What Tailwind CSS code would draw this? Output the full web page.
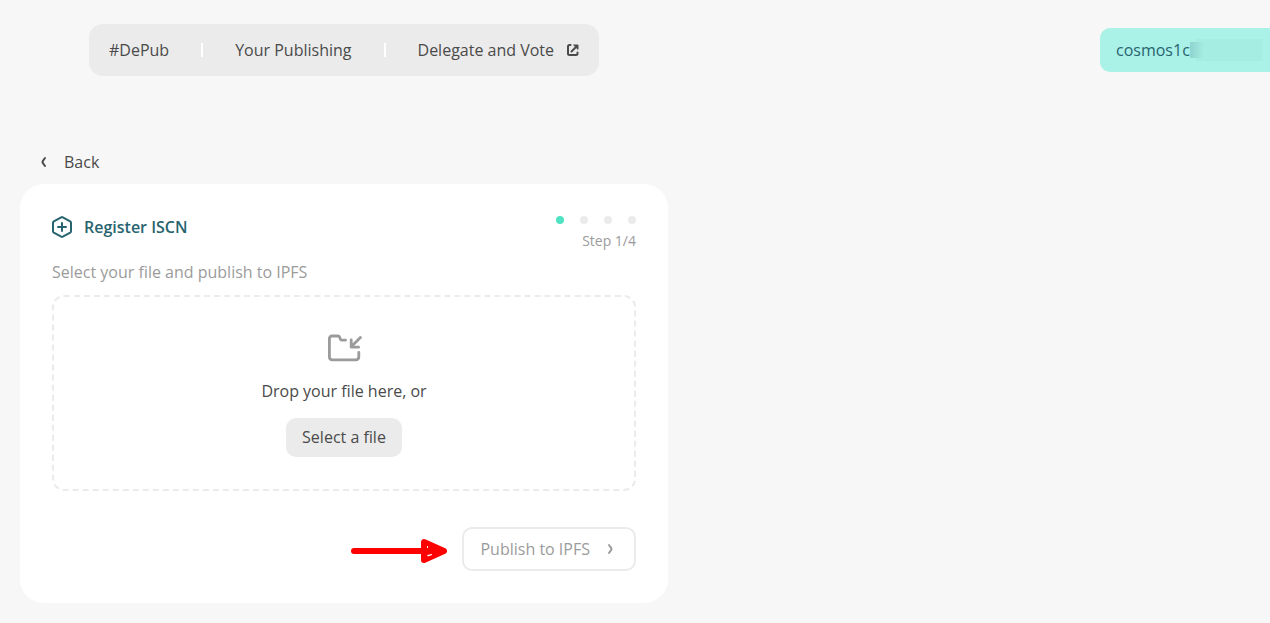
<!DOCTYPE html>
<html lang="en">
<head>
<meta charset="utf-8">
<meta name="viewport" content="width=device-width, initial-scale=1">
<title>Register ISCN</title>
<script src="https://cdn.jsdelivr.net/npm/@tailwindcss/browser@4"></script>
</head>
<body class="min-h-screen overflow-x-hidden bg-[#f7f7f7] font-['Open_Sans',sans-serif] text-base text-[#4a4a4a]">
  <header class="flex items-center justify-between pt-6 pl-[89px]">
    <nav class="flex h-[52px] items-center gap-8 rounded-[14px] bg-[#ebebeb] px-5">
      <a href="#depub">#DePub</a>
      <span class="h-3.5 w-0.5 bg-white"></span>
      <a href="#publishing">Your Publishing</a>
      <span class="h-3.5 w-0.5 bg-white"></span>
      <a href="#vote" class="flex items-center gap-3">Delegate and Vote
        <svg class="h-3.5 w-[13px]" viewBox="0 0 13 14" fill="none" stroke="currentColor" stroke-width="2" stroke-linecap="round" aria-hidden="true">
          <path d="M4.500 2H3.500Q2 2 2 3.500V10.500Q2 12 3.500 12H10Q11.500 12 11.500 10.500V9.500"/>
          <path d="M5.500 8.500L10 4"/>
          <path d="M8 2H12V6Z" fill="currentColor" stroke-width="1" stroke-linejoin="round"/>
        </svg>
      </a>
    </nav>
    <button type="button" class="flex h-11 w-[170px] items-center rounded-l-[10px] bg-[#aaf1e7] pl-4 text-[#28646e]">
      <span>cosmos1c</span>
      <span class="flex h-[22px] w-18 items-center bg-linear-to-r from-transparent from-[6px] to-[#a5ede2] to-[6px]">
        <span class="h-4 w-3.5 bg-linear-to-r from-[#8fd3cf] to-[#a5ede2]"></span>
      </span>
    </button>
  </header>

  <main class="max-w-[688px] px-5 pt-[74px]">
    <a href="#back" class="flex w-fit items-center gap-4 pl-5">
      <svg class="h-3 w-2" viewBox="0 0 8 12" fill="none" stroke="currentColor" stroke-width="2" stroke-linecap="round" stroke-linejoin="round" aria-hidden="true"><path d="M5 2L2.900 4.800Q2 6 2.900 7.200L5 10"/></svg>
      Back
    </a>
    <section class="relative mt-2.5 rounded-3xl bg-white p-8">
      <div class="flex items-start justify-between">
        <h1 class="flex items-center gap-3 leading-[22px] font-semibold text-[#28646e]">
          <svg class="h-[22px] w-5" viewBox="0 0 20 22" fill="none" stroke="currentColor" stroke-width="2" stroke-linecap="round" stroke-linejoin="round" aria-hidden="true">
            <path d="M9.2 1.3Q10 .9 10.8 1.3L18.2 5.4Q19 5.9 19 6.8V15.2Q19 16.1 18.2 16.6L10.8 20.7Q10 21.1 9.2 20.7L1.8 16.6Q1 16.1 1 15.2V6.8Q1 5.9 1.8 5.4Z"/>
            <path d="M10 7V15M6 11H14"/>
          </svg>
          Register ISCN
        </h1>
        <div class="flex flex-col items-end gap-[7px]">
          <div class="flex gap-4">
            <span class="size-2 rounded-full bg-[#50e3c2]"></span>
            <span class="size-2 rounded-full bg-[#ebebeb]"></span>
            <span class="size-2 rounded-full bg-[#ebebeb]"></span>
            <span class="size-2 rounded-full bg-[#ebebeb]"></span>
          </div>
          <p class="text-sm text-[#9b9b9b]">Step 1/4</p>
        </div>
      </div>
      <p class="mt-[9px] text-[#9b9b9b]">Select your file and publish to IPFS</p>
      <div class="mt-[11px] flex h-[196px] flex-col items-center rounded-xl border-2 border-dashed border-[#ebebeb] pt-[37px]">
        <svg class="h-7 w-9" viewBox="-2 0 36 28" fill="none" stroke="#9b9b9b" stroke-width="2.8" stroke-linecap="round" stroke-linejoin="round" aria-hidden="true">
          <path d="M17.5 6.2H14.2Q12.8 6.2 12.3 4.9L11.7 3.2Q11.2 2 9.8 2H4.2Q1.4 2 1.4 4.8V22.8Q1.4 25.8 4.4 25.8H27.8Q30.8 25.8 30.8 22.8V18.3"/>
          <path d="M32.4 3.6L23.2 12.8M23.2 6V13.2H30.6"/>
        </svg>
        <p class="mt-[17px]">Drop your file here, or</p>
        <button type="button" class="mt-[15px] h-[39px] rounded-[10px] bg-[#ebebeb] px-4 pb-0.5">Select a file</button>
      </div>
      <div class="mt-9 flex justify-end">
        <button type="button" class="flex h-11 items-center gap-4 rounded-[10px] border-2 border-[#ebebeb] pr-5 pl-4 text-[#9b9b9b]">Publish to IPFS
          <svg class="h-3 w-2" viewBox="0 0 8 12" fill="none" stroke="currentColor" stroke-width="2" stroke-linecap="round" stroke-linejoin="round" aria-hidden="true"><path d="M3 2L5.100 4.800Q6 6 5.100 7.200L3 10"/></svg>
        </button>
      </div>
      <svg class="absolute right-[220px] bottom-[39px] h-[26px] w-[98px]" viewBox="0 0 98 26" aria-hidden="true">
        <path d="M4 13H73" stroke="#f00" stroke-width="6" stroke-linecap="round"/>
        <path d="M74 4V22L94 13Z" fill="#f00" stroke="#f00" stroke-width="6" stroke-linejoin="round"/>
        <path d="M77 8h1v2h-1zM77 17l5-1v1l-4 1.500z" fill="#fff"/>
      </svg>
    </section>
  </main>
</body>
</html>
